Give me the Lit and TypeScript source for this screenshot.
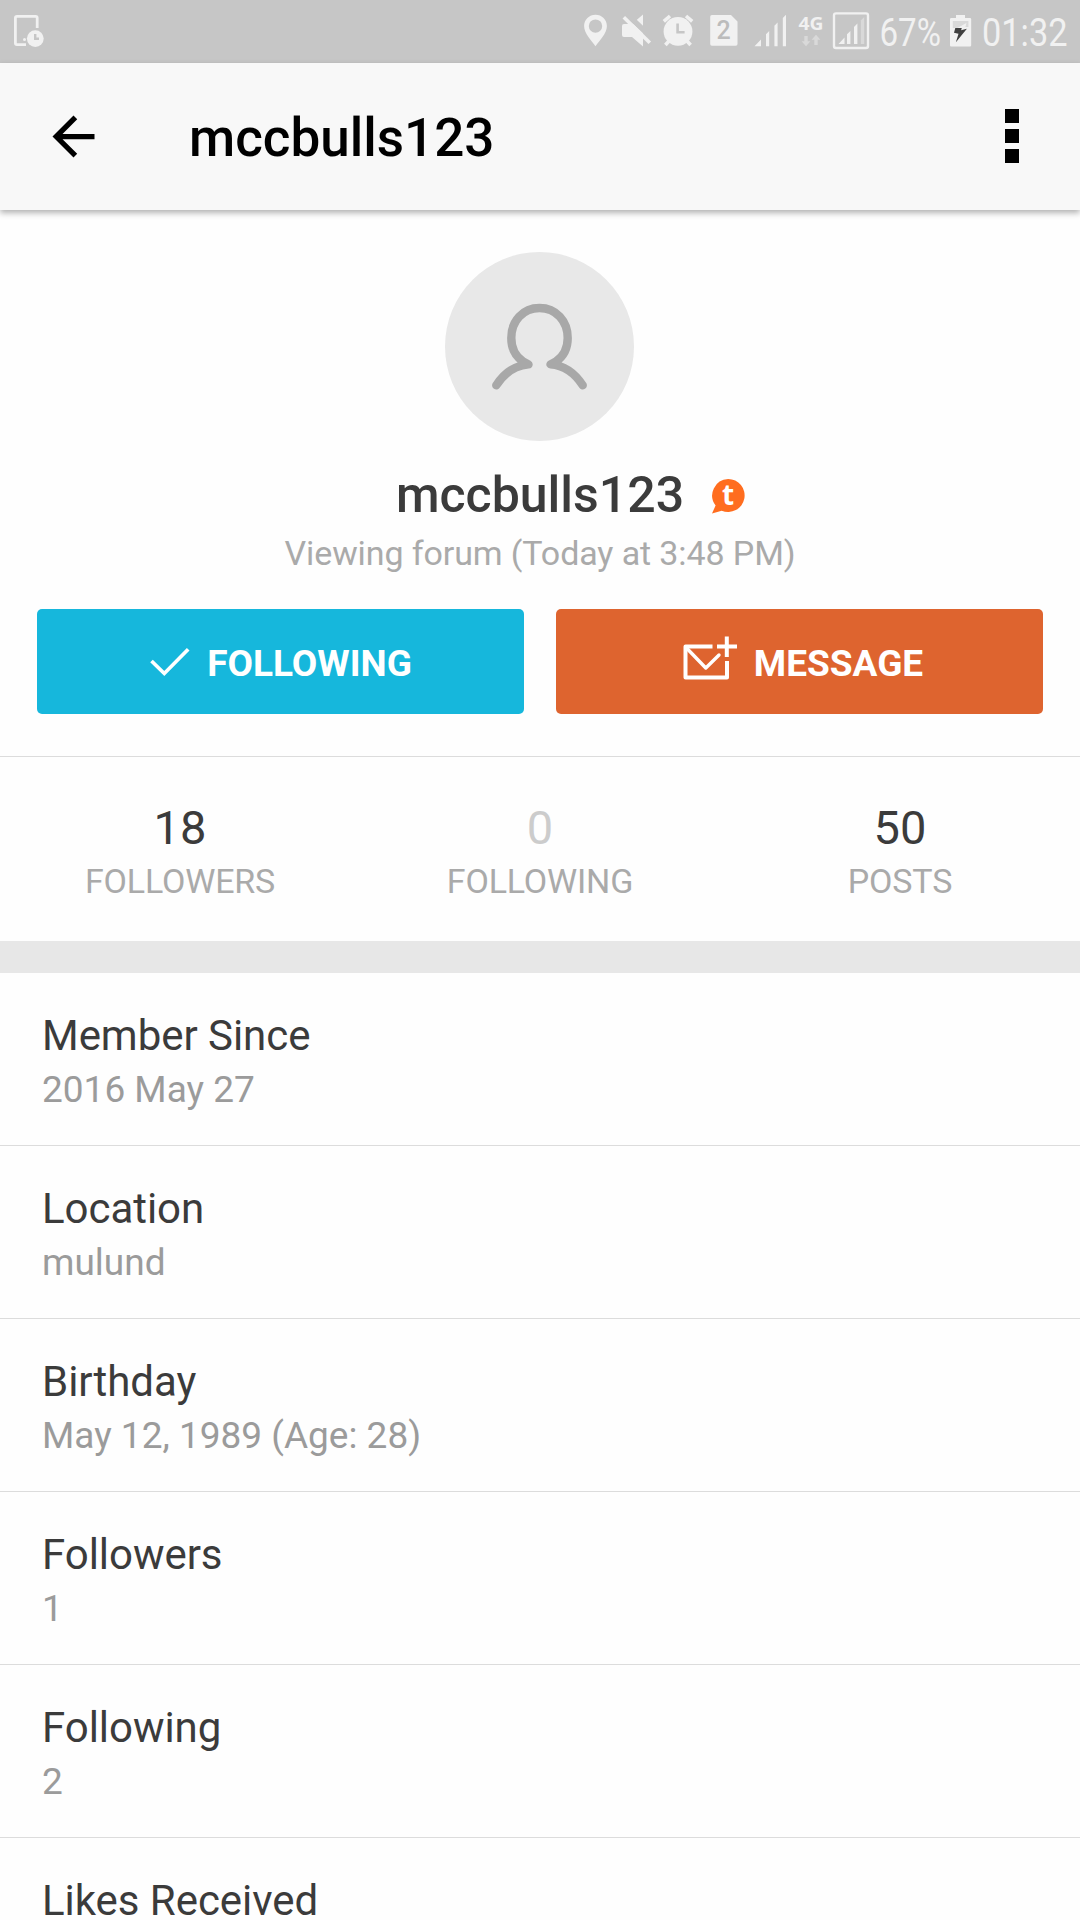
import { LitElement, html, css, svg } from "lit";
import { customElement, property } from "lit/decorators.js";

@customElement("status-bar")
class StatusBar extends LitElement {
  static styles = css`
    :host {
      display: flex;
      justify-content: space-between;
      height: 63px;
      background: #c6c6c6;
    }
    .group {
      display: flex;
    }
    svg {
      display: block;
      height: 63px;
      overflow: visible;
      fill: #f1f1f1;
    }
    .line {
      fill: none;
      stroke: #f1f1f1;
    }
    .cut {
      fill: none;
      stroke: #c6c6c6;
    }
    .dim {
      fill: #d9d9d9;
    }
    .bolt {
      fill: #404040;
    }
    .sim {
      font: 500 25px Roboto, sans-serif;
      fill: #bcbcbc;
    }
    .net {
      font: 700 18px "Noto Sans", sans-serif;
    }
    .digits {
      font: 400 39.4px Roboto, sans-serif;
    }
  `;

  /* Every glyph is drawn in bar coordinates; its box is the slice from x to x + w. */
  private slice(x: number, w: number, content: unknown) {
    return html`<svg width=${w} viewBox="${x} 0 ${w} 63">${content}</svg>`;
  }

  render() {
    return html`
      <div class="group">
        ${this.slice(0, 60, svg`
          <path class="line" stroke-width="2.8" d="M37.2 28V18q0-1.6-1.6-1.6H17q-1.6 0-1.6 1.6v25q0 1.6 1.6 1.6h9"/>
          <circle cx="24.5" cy="39.5" r="1.5"/>
          <circle cx="35.3" cy="38.6" r="8.4"/>
          <path class="cut" stroke-width="2.4" d="M35.2 34v4.8h3.8"/>
        `)}
      </div>
      <div class="group">
        ${this.slice(580, 34, svg`
          <path fill-rule="evenodd" d="M595.5 14.8c6.4 0 11.4 4.9 11.4 11.2 0 7.6-7.4 14.6-11.4 20.2-4-5.6-11.4-12.6-11.4-20.2 0-6.3 5-11.2 11.4-11.2zm0 4.6a6.7 6.7 0 1 0 0 13.4 6.7 6.7 0 0 0 0-13.4z"/>
        `)}
        ${this.slice(614, 44, svg`
          <path d="M624 24h8l11-9.4v32L632 37h-8q-2 0-2-2v-9q0-2 2-2z"/>
          <path class="cut" stroke-width="5.5" d="M624 11.5l29 27.5"/>
          <path class="line" stroke-width="3.6" d="M623.8 17.3l26 25.4"/>
        `)}
        ${this.slice(658, 44, svg`
          <circle cx="678" cy="31.4" r="14.4"/>
          <path class="line" stroke-width="3.6" d="M663.8 21.4l6.2-5.4M692.2 21.4l-6.2-5.4M669 41l-3.6 4M687 41l3.6 4"/>
          <path class="cut" stroke-width="2.6" d="M677.6 23.5v8.8h7"/>
        `)}
        ${this.slice(702, 44, svg`
          <path d="M712 15h19l6.5 6.5V44q0 1.8-1.8 1.8H712q-1.8 0-1.8-1.8V16.8q0-1.8 1.8-1.8z"/>
          <text class="sim" x="723.5" y="39" text-anchor="middle">2</text>
        `)}
        ${this.slice(746, 48, svg`
          <path d="M754.5 46.2l6.5-6.7v6.7zM766 34.3l3.2-3.2v15.1H766zM774.4 25.8l3.2-3.2v23.6h-3.2zM782.8 18l3.2-3.2v31.4h-3.2z"/>
        `)}
        ${this.slice(794, 34, svg`
          <text class="net" x="798.5" y="30.3" textLength="25" lengthAdjust="spacingAndGlyphs">4G</text>
          <path class="dim" d="M804.3 36h3.4v5.2h2.7l-4.4 5-4.4-5h2.7zM814.3 45v-5.2h-2.7l4.4-5 4.4 5h-2.7V45z"/>
        `)}
        ${this.slice(828, 48, svg`
          <rect class="line" stroke-width="2.4" x="834" y="13.4" width="34" height="34.6" rx="2"/>
          <path d="M838.5 44l6-6.5V44zM847 34.3l3.4-3.4V44H847zM854 27l3.4-3.4V44H854z"/>
          <path class="dim" d="M860.8 20.4l3.4-3.4v27h-3.4z"/>
        `)}
        ${this.slice(876, 68, svg`
          <text class="digits" x="879.5" y="46.4" textLength="61.5" lengthAdjust="spacingAndGlyphs">67%</text>
        `)}
        ${this.slice(944, 34, svg`
          <path d="M956 15h9v3h5q1.2 0 1.2 1.2v26q0 1.2-1.2 1.2h-18.8q-1.2 0-1.2-1.2v-26q0-1.2 1.2-1.2h4.8z"/>
          <path class="dim" d="M952.8 21h15.6v6h-3l1-4-9 5h-4.6z"/>
          <path class="bolt" d="M955.3 28h6.5l-.7 2.2 5.8-1.5-11 13.6 2.6-8.6-4.5-1z"/>
        `)}
        ${this.slice(978, 102, svg`
          <text class="digits" x="982" y="46.4" textLength="85.5" lengthAdjust="spacingAndGlyphs">01:32</text>
        `)}
      </div>
    `;
  }
}

@customElement("app-header")
class AppHeader extends LitElement {
  @property() heading = "";

  static styles = css`
    :host {
      display: flex;
      align-items: center;
      box-sizing: border-box;
      height: 147px;
      padding: 0 61.5px 0 42px;
      background: #f8f8f8;
      box-shadow: 0 3px 6px rgba(0, 0, 0, 0.3);
      position: relative;
    }
    .title {
      flex: 1;
      margin: 3px 0 0 84px;
      font-size: 53px;
      font-weight: 500;
      line-height: 62px;
      color: #000;
    }
    .menu {
      display: flex;
      flex-direction: column;
      gap: 6.5px;
      margin-top: -1px;
    }
    .dot {
      width: 13.5px;
      height: 13.5px;
      background: #000;
    }
  `;

  render() {
    return html`
      <svg width="63" height="63" viewBox="0 0 24 24">
        <path d="M20 11H7.83l5.59-5.59L12 4l-8 8 8 8 1.41-1.41L7.83 13H20v-2z" />
      </svg>
      <div class="title">${this.heading}</div>
      <div class="menu">
        <div class="dot"></div>
        <div class="dot"></div>
        <div class="dot"></div>
      </div>
    `;
  }
}

@customElement("app-root")
class AppRoot extends LitElement {
  static styles = css`
    :host {
      display: block;
      width: 1080px;
      height: 1920px;
      overflow: hidden;
      background: #fefefe;
      font-family: Roboto, sans-serif;
      color: #3b3b3b;
    }
    svg {
      display: block;
      overflow: visible;
    }
    .profile {
      display: flex;
      flex-direction: column;
      align-items: center;
      padding: 42px 37px;
      border-bottom: 1px solid #dcdcdc;
    }
    .avatar {
      width: 189px;
      height: 189px;
      margin-right: 1px;
      border-radius: 50%;
      background: #e8e8e8;
    }
    .name-row {
      display: grid;
      grid-template-columns: 1fr auto 1fr;
      align-items: center;
      width: 100%;
      margin-top: 24px;
    }
    .name {
      grid-column: 2;
      font-size: 50px;
      font-weight: 500;
      line-height: 60px;
    }
    .badge {
      margin: 1px 0 0 27px;
    }
    .badge-letter {
      font: 700 28px "Open Sans", sans-serif;
      fill: #fff;
    }
    .activity {
      margin-top: 8px;
      font-size: 34px;
      line-height: 40px;
      letter-spacing: -0.11px;
      color: #aaa;
    }
    .actions {
      display: grid;
      grid-template-columns: 1fr 1fr;
      gap: 32px;
      width: 100%;
      margin-top: 36px;
    }
    .button {
      display: flex;
      align-items: center;
      justify-content: center;
      gap: 17px;
      box-sizing: border-box;
      height: 105px;
      border-radius: 5px;
      color: #fff;
      font-size: 37px;
      font-weight: 700;
      line-height: 44px;
    }
    .button-label {
      margin-top: 4px;
    }
    .follow {
      padding-left: 1px;
      background: #16b7dc;
    }
    .message {
      padding-left: 7px;
      background: #de642f;
    }
    .message svg {
      margin-top: -7px;
    }
    .stats {
      display: grid;
      grid-template-columns: repeat(3, 1fr);
      box-sizing: border-box;
      height: 184px;
      padding-top: 43px;
      text-align: center;
    }
    .count {
      font-size: 47px;
      line-height: 56px;
    }
    .empty {
      color: #ccc;
    }
    .caption {
      margin-top: 5px;
      font-size: 34px;
      line-height: 40px;
      letter-spacing: -0.18px;
      color: #aaa;
    }
    .band {
      height: 32px;
      background: #e7e7e7;
    }
    .field {
      box-sizing: border-box;
      height: 173px;
      padding: 38px 42px 0;
      border-bottom: 1px solid #dcdcdc;
    }
    .label {
      font-size: 42px;
      line-height: 50px;
      letter-spacing: -0.04px;
    }
    .value {
      margin-top: 7px;
      font-size: 37px;
      line-height: 44px;
      color: #9b9b9b;
    }
  `;

  private stats = [
    { count: 18, caption: "FOLLOWERS" },
    { count: 0, caption: "FOLLOWING" },
    { count: 50, caption: "POSTS" },
  ];

  private fields = [
    ["Member Since", "2016 May 27"],
    ["Location", "mulund"],
    ["Birthday", "May 12, 1989 (Age: 28)"],
    ["Followers", "1"],
    ["Following", "2"],
    ["Likes Received", ""],
  ];

  render() {
    return html`
      <status-bar></status-bar>
      <app-header heading="mccbulls123"></app-header>
      <div class="profile">
        <svg class="avatar" viewBox="0 0 189 189" fill="none" stroke="#a8a8a8" stroke-width="8.4" stroke-linecap="round" stroke-linejoin="round">
          <path d="M51.3 133.3C58 123 69 113.5 83.5 112.4L78 109.5C70 104 66.3 95 66.3 86C66.3 69 78 56 94.5 56S122.7 69 122.7 86C122.7 95 119 104 111 109.5L105.5 112.4C120 113.5 131 123 137.7 133.3" />
        </svg>
        <div class="name-row">
          <div class="name">mccbulls123</div>
          <svg class="badge" width="34" height="36" viewBox="0 0 34 36">
            <path fill="#ff6d1f" d="M17.2 1a16.5 16.5 0 1 1-6.5 31.7L1 35.5l3.6-8A16.5 16.5 0 0 1 17.2 1z" />
            <text class="badge-letter" x="17" y="27" text-anchor="middle">t</text>
          </svg>
        </div>
        <div class="activity">Viewing forum (Today at 3:48 PM)</div>
        <div class="actions">
          <div class="button follow">
            <svg width="40" height="30" viewBox="0 0 40 30" fill="none" stroke="#fff" stroke-width="3.7">
              <path d="M1.5 14L14.3 26.5L38.2 2.2" />
            </svg>
            <span class="button-label">FOLLOWING</span>
          </div>
          <div class="button message">
            <svg width="54" height="44" viewBox="0 0 54 44" fill="none" stroke="#fff" stroke-width="4">
              <path stroke-linejoin="round" d="M29.5 10.5H2.5V41.5H44V25" />
              <path stroke-linecap="round" stroke-linejoin="round" stroke-width="3.4" d="M4 12.5L22.8 32L36 19" />
              <path d="M43.8 .5V21M34 10.5H54" />
            </svg>
            <span class="button-label">MESSAGE</span>
          </div>
        </div>
      </div>
      <div class="stats">
        ${this.stats.map(
          (s) => html`<div>
            <div class="count ${s.count ? "" : "empty"}">${s.count}</div>
            <div class="caption">${s.caption}</div>
          </div>`
        )}
      </div>
      <div class="band"></div>
      ${this.fields.map(
        ([label, value]) => html`<div class="field">
          <div class="label">${label}</div>
          <div class="value">${value}</div>
        </div>`
      )}
    `;
  }
}
